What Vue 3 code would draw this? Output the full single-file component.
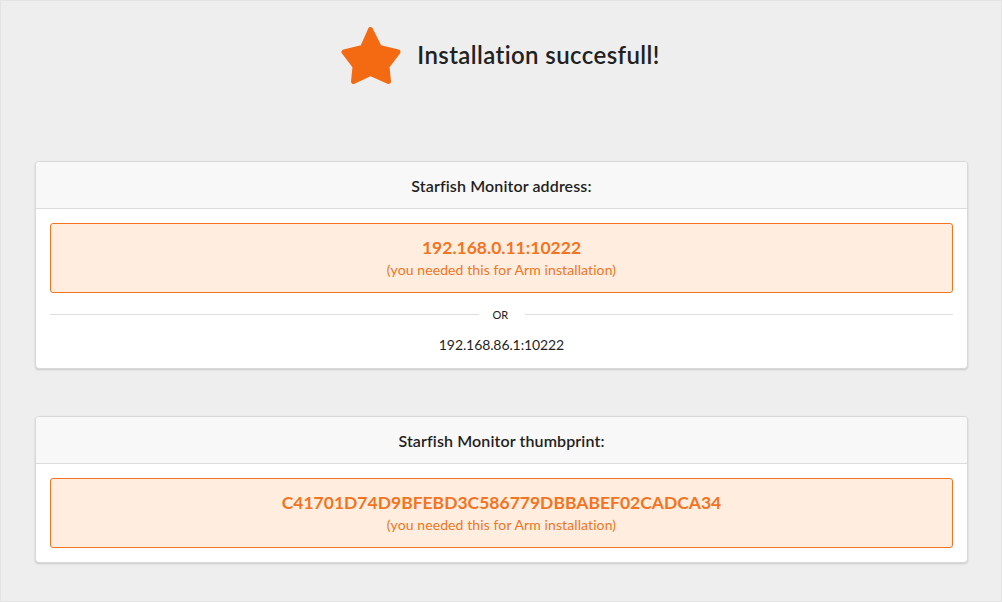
<script setup>
const cards = [
  { title: 'Starfish Monitor address:', value: '192.168.0.11:10222', alt: '192.168.86.1:10222' },
  { title: 'Starfish Monitor thumbprint:', value: 'C41701D74D9BFEBD3C586779DBBABEF02CADCA34' },
]
</script>

<template>
  <div class="page">
    <header class="hero">
      <svg class="star" viewBox="0 0 60 57" width="60" height="57" aria-hidden="true">
        <path d="M29.5 2.5 L38.5 20.5 L57 25 L46 39.5 L47.5 54.5 L29.5 46.5 L12.5 54.5 L14 39.5 L3 25 L21.5 20.5 Z" fill="#f46a12" stroke="#f46a12" stroke-width="5" stroke-linejoin="round" />
      </svg>
      <h1 class="heading">Installation succesfull!</h1>
    </header>
    <section v-for="c in cards" :key="c.title" class="card">
      <div class="card-head">{{ c.title }}</div>
      <div class="card-body">
        <div class="notice">
          <div class="notice-value">{{ c.value }}</div>
          <div class="notice-sub">(you needed this for Arm installation)</div>
        </div>
        <template v-if="c.alt">
          <div class="divider"><span>OR</span></div>
          <div class="alt">{{ c.alt }}</div>
        </template>
      </div>
    </section>
  </div>
</template>

<style>
html, body { margin: 0; background: #eeeeee; }
</style>

<style scoped>
.page {
  box-sizing: border-box;
  width: 1002px;
  height: 602px;
  overflow: hidden;
  border: 1px solid #e3e3e3;
  background: #eeeeee;
  padding: 0 33px 0 34px;
  font-family: Lato, "Liberation Sans", sans-serif;
  color: #1f1f1f;
}
.hero {
  display: flex;
  align-items: center;
  justify-content: center;
  gap: 16px;
  height: 160px;
  padding-bottom: 52px;
  box-sizing: border-box;
  padding-right: 2px;
}
.star { display: block; flex: none; }
.heading {
  margin: 0;
  font-size: 24px;
  font-weight: 600;
  line-height: 30px;
  letter-spacing: 0.4px;
  color: #212121;
}
.card {
  background: #fff;
  border: 1px solid #d8d8d8;
  border-radius: 4px;
  box-shadow: 0 1px 2px rgba(0, 0, 0, .16);
  margin-bottom: 47px;
}
.card-head {
  height: 47px;
  box-sizing: border-box;
  border-bottom: 1px solid #dcdcdc;
  background: #f8f8f8;
  border-radius: 3px 3px 0 0;
  text-align: center;
  font-size: 16px;
  font-weight: 600;
  letter-spacing: .12px;
  line-height: 47px;
}
.card-body { padding: 14px; }
.notice {
  box-sizing: border-box;
  height: 70px;
  border: 1px solid #f47321;
  border-radius: 3px;
  background: #ffeedf;
  color: #f47321;
  text-align: center;
  padding-top: 12px;
}
.notice-value { font-size: 17.5px; font-weight: 700; line-height: 24px; }
.notice-sub { font-size: 14px; line-height: 18px; margin-top: 1px; letter-spacing: .1px; }
.divider {
  display: flex;
  align-items: center;
  gap: 14px;
  margin-top: 13px;
  height: 16px;
  font-size: 11px;
  color: #222;
}
.divider span { width: 18px; flex: none; }
.divider::before, .divider::after {
  content: "";
  flex: 1;
  height: 1px;
  background: #dedede;
}
.alt {
  text-align: center;
  font-size: 14px;
  letter-spacing: -.1px;
  line-height: 19px;
  margin-top: 13px;
}
</style>
